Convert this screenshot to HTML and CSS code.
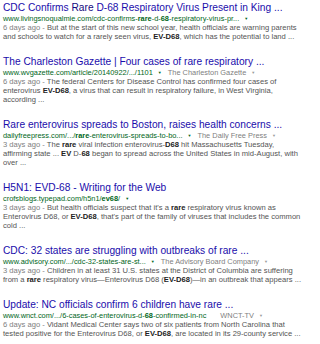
FILE: index.html
```html
<!DOCTYPE html>
<html lang="en">
<head>
<meta charset="UTF-8">
<title>rare EV-D68 - Search</title>
<link rel="stylesheet" href="styles.css">
</head>
<body>
<div id="results">
    <div class="result">
        <h3 class="title"><a href="#">CDC Confirms <span class="hl">Rare</span> D-68 Respiratory Virus Present in King ...</a></h3>
        <div class="url"><cite>www.livingsnoqualmie.com/cdc-confirms-<b>rare</b>-d-<b>68</b>-respiratory-virus-pr...</cite><span class="arrow">&#9660;</span></div>
        <div class="snippet"><span class="date">6 days ago - </span>But at the start of this new school year, health officials are warning parents<br>and schools to watch for a rarely seen virus, <b>EV-D68</b>, which has the potential to land ...</div>
    </div>
    <div class="result">
        <h3 class="title"><a href="#">The Charleston Gazette | Four cases of rare respiratory ...</a></h3>
        <div class="url"><cite>www.wvgazette.com/article/20140922/.../1101</cite><span class="arrow">&#9660;</span><span class="source">The Charleston Gazette</span><span class="arrow gray">&#9660;</span></div>
        <div class="snippet"><span class="date">6 days ago - </span>The federal Centers for Disease Control has confirmed four cases of<br>enterovirus <b>EV-D68</b>, a virus that can result in respiratory failure, in West Virginia,<br>according ...</div>
    </div>
    <div class="result">
        <h3 class="title"><a href="#">Rare enterovirus spreads to Boston, raises health concerns ...</a></h3>
        <div class="url"><cite>dailyfreepress.com/.../<b>rare</b>-enterovirus-spreads-to-bo...</cite><span class="arrow">&#9660;</span><span class="source">The Daily Free Press</span><span class="arrow gray">&#9660;</span></div>
        <div class="snippet"><span class="date">3 days ago - </span>The <b>rare</b> viral infection enterovirus-<b>D68</b> hit Massachusetts Tuesday,<br>affirming state ... <b>EV</b> D-<b>68</b> began to spread across the United States in mid-August, with<br>over ...</div>
    </div>
    <div class="result">
        <h3 class="title"><a href="#">H5N1: EVD-68 - Writing for the Web</a></h3>
        <div class="url"><cite>crofsblogs.typepad.com/h5n1/<b>ev68</b>/</cite><span class="arrow">&#9660;</span></div>
        <div class="snippet"><span class="date">3 days ago - </span>But health officials suspect that it's a <b>rare</b> respiratory virus known as<br>Enterovirus D68, or <b>EV-D68</b>, that's part of the family of viruses that includes the common<br>cold ...</div>
    </div>
    <div class="result">
        <h3 class="title"><a href="#">CDC: 32 states are struggling with outbreaks of rare ...</a></h3>
        <div class="url"><cite>www.advisory.com/.../cdc-32-states-are-st...</cite><span class="arrow">&#9660;</span><span class="source">The Advisory Board Company</span><span class="arrow gray">&#9660;</span></div>
        <div class="snippet"><span class="date">3 days ago - </span>Children in at least 31 U.S. states at the District of Columbia are suffering<br>from a <b>rare</b> respiratory virus&mdash;Enterovirus D68 (<b>EV-D68</b>)&mdash;in an outbreak that appears ...</div>
    </div>
    <div class="result">
        <h3 class="title"><a href="#">Update: NC officials confirm 6 children have rare ...</a></h3>
        <div class="url"><cite>www.wnct.com/.../6-cases-of-enterovirus-d-<b>68</b>-confirmed-in-nc</cite><span class="source wide">WNCT-TV</span><span class="arrow gray">&#9660;</span></div>
        <div class="snippet"><span class="date">6 days ago - </span>Vidant Medical Center says two of six patients from North Carolina that<br>tested positive for the Enterovirus D68, or <b>EV-D68</b>, are located in its 29-county service ...</div>
    </div>
</div>
</body>
</html>
```

FILE: styles.css
```css
body {
    margin: 0;
    padding: 0;
    background-color: #fff;
    font-family: "Liberation Sans", Arial, sans-serif;
}
#results {
    padding: 2px 0 0 3px;
}
.result {
    margin-bottom: 15px;
}
.title {
    margin: 0;
    font-size: 10.2px;
    font-weight: normal;
    line-height: 12px;
    white-space: nowrap;
}
.title a {
    color: #1a0dab;
    text-decoration: none;
}
.title .hl {
    color: #140a80;
}
.url {
    font-size: 7.4px;
    line-height: 9px;
    color: #006621;
    white-space: nowrap;
}
.url cite {
    font-style: normal;
}
.arrow {
    display: inline-block;
    margin-left: 5px;
    font-size: 4px;
    vertical-align: 1px;
}
.arrow.gray {
    color: #999;
}
.source {
    margin-left: 6px;
    color: #808080;
}
.source.wide {
    margin-left: 14px;
}
.snippet {
    font-size: 7.6px;
    line-height: 9px;
    color: #545454;
    white-space: nowrap;
}
.date {
    color: #808080;
}
.snippet b {
    color: #222;
}
```
